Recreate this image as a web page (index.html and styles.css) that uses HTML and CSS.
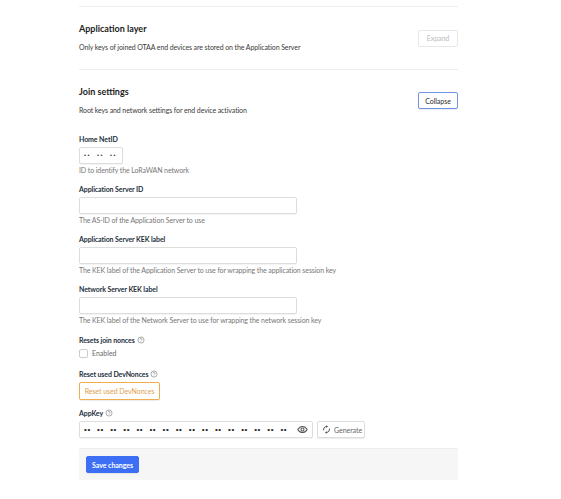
FILE: index.html
```html
<!DOCTYPE html>
<html lang="en">
<head>
<meta charset="utf-8">
<title>Join settings</title>
<link rel="stylesheet" href="styles.css">
</head>
<body>
<main class="page">
  <section class="section first">
    <div class="section-text">
      <h2>Application layer</h2>
      <p>Only keys of joined OTAA end devices are stored on the Application Server</p>
    </div>
    <button class="btn disabled">Expand</button>
  </section>
  <section class="section second">
    <div class="section-text">
      <h2>Join settings</h2>
      <p>Root keys and network settings for end device activation</p>
    </div>
    <button class="btn focus">Collapse</button>
  </section>
  <form class="form">
    <div class="field netid">
      <label>Home NetID</label>
      <div class="input small"><span class="key-dots net"><i>••</i><i>••</i><i>••</i></span></div>
      <small>ID to identify the LoRaWAN network</small>
    </div>
    <div class="field">
      <label>Application Server ID</label>
      <div class="input wide"></div>
      <small>The AS-ID of the Application Server to use</small>
    </div>
    <div class="field">
      <label>Application Server KEK label</label>
      <div class="input wide"></div>
      <small>The KEK label of the Application Server to use for wrapping the application session key</small>
    </div>
    <div class="field">
      <label>Network Server KEK label</label>
      <div class="input wide"></div>
      <small>The KEK label of the Network Server to use for wrapping the network session key</small>
    </div>
    <div class="field nonces">
      <label>Resets join nonces <svg class="help" viewBox="0 0 12 12"><circle cx="6" cy="6" r="4.6"/><path d="M4.6 4.8a1.4 1.4 0 1 1 2.2 1.2c-.5.4-.8.6-.8 1.2M6 8.4v.6"/></svg></label>
      <div class="check"><span class="box"></span><span>Enabled</span></div>
    </div>
    <div class="field reset">
      <label>Reset used DevNonces <svg class="help" viewBox="0 0 12 12"><circle cx="6" cy="6" r="4.6"/><path d="M4.6 4.8a1.4 1.4 0 1 1 2.2 1.2c-.5.4-.8.6-.8 1.2M6 8.4v.6"/></svg></label>
      <button type="button" class="btn warn">Reset used DevNonces</button>
    </div>
    <div class="field appkey">
      <label>AppKey <svg class="help" viewBox="0 0 12 12"><circle cx="6" cy="6" r="4.6"/><path d="M4.6 4.8a1.4 1.4 0 1 1 2.2 1.2c-.5.4-.8.6-.8 1.2M6 8.4v.6"/></svg></label>
      <div class="key-row">
        <div class="input key">
          <span class="key-dots"><i>••</i><i>••</i><i>••</i><i>••</i><i>••</i><i>••</i><i>••</i><i>••</i><i>••</i><i>••</i><i>••</i><i>••</i><i>••</i><i>••</i><i>••</i><i>••</i></span>
          <svg class="eye" viewBox="0 0 16 16"><path d="M1.2 8C2.8 5 5.2 3.5 8 3.5S13.2 5 14.8 8c-1.6 3-4 4.5-6.800 4.500S2.800 11 1.200 8z"/><circle cx="8" cy="8" r="2.200"/></svg>
        </div>
        <button type="button" class="btn generate">
          <svg class="autorenew" viewBox="0 0 16 16"><path d="M3 9.500A5.200 5.200 0 0 1 8 2.800"/><path d="M13 6.500A5.200 5.200 0 0 1 8 13.200"/><path class="fill" d="M7.600 .6v4.400l3-2.200zM8.400 15.400V11l-3 2.200z"/></svg>
          Generate
        </button>
      </div>
    </div>
    <div class="footer"><button type="button" class="btn primary">Save changes</button></div>
  </form>
</main>
</body>
</html>
```
FILE: styles.css
```css
* { box-sizing: border-box; }
html, body { margin: 0; background: #fff; }
body { font-family: "Lato", "Noto Sans", sans-serif; color: #222; }
.page { width: 379px; margin-left: 79px; padding-top: 6px; }
.section { display: flex; justify-content: space-between; align-items: center; border-top: 1px solid #eee; }
.first { height: 63px; }
.first .section-text { padding-bottom: 1px; }
.second { height: 62px; }
.section-text { display: flex; flex-direction: column; }
h2 { margin: 0 0 7px; font-size: 9px; line-height: 13px; font-weight: 700; color: #1c1c1c; }
p { margin: 0; font-size: 7px; letter-spacing: -.1px; line-height: 11px; color: #3a3a3a; }
.btn { font-family: inherit; font-size: 7px; letter-spacing: -.05px; height: 17px; padding: 0 6px; background: #fff; border: 1px solid #ddd; border-radius: 2px; color: #333; box-shadow: 0 1px 1px rgba(0,0,0,.08); }
.disabled { width: 40px; color: #bbb; border-color: #e8e8e8; box-shadow: none; }
.focus { width: 40px; border-color: #6f93e8; color: #2a2a2a; }
.form { display: flex; flex-direction: column; }
.field { display: flex; flex-direction: column; align-items: flex-start; }
.netid { margin-top: 3px; }
label { display: flex; align-items: center; gap: 2px; font-size: 7px; letter-spacing: -.1px; line-height: 10px; font-weight: 700; color: #26303c; margin-bottom: 3px; }
.input { height: 17px; border: 1px solid #ddd; border-radius: 2px; background: #fff; box-shadow: 0 1px 1px rgba(0,0,0,.05); }
.small { width: 44px; display: flex; align-items: center; padding-left: 4px; }
.wide { width: 218px; }
small { font-size: 7px; letter-spacing: -.1px; line-height: 11px; color: #777; margin-top: 1px; margin-bottom: 8px; }
.nonces { margin-top: 1px; }
.check { display: flex; align-items: center; gap: 4px; font-size: 7px; line-height: 10px; color: #666; margin-bottom: 11px; }
.box { width: 9px; height: 9px; border: 1px solid #ccc; border-radius: 2px; background: #fff; }
.help { width: 8px; height: 8px; fill: none; stroke: #777; stroke-width: .9; }
.reset label { margin-bottom: 3px; }
.warn { width: 81px; height: 18px; color: #e0a050; border-color: #f0ad4e; padding: 0; }
.appkey { margin-top: 8px; }
.key-row { display: flex; gap: 4px; }
.key { width: 234px; height: 17px; display: flex; align-items: center; justify-content: space-between; padding: 0 4px; }
.key-dots { display: flex; font-size: 8px; font-family: "Liberation Sans", sans-serif; line-height: 1; color: #222; }
.key-dots i { font-style: normal; width: 13.100px; letter-spacing: .6px; }
.net { font-size: 5.500px; color: #333; }
.net i { width: 13px; letter-spacing: 1.500px; }
.eye { width: 11px; height: 11px; fill: none; stroke: #555; stroke-width: 1.500; }
.generate { width: 48px; display: flex; align-items: center; gap: 3px; padding: 0 4px; color: #666; white-space: nowrap; }
.autorenew { flex: none; width: 9px; height: 9px; fill: none; stroke: #333; stroke-width: 1.500; }
.autorenew .fill { fill: #333; stroke: none; }
.footer { margin-top: 10px; height: 32px; background: #f6f6f6; border-top: 1px solid #eee; display: flex; align-items: center; padding-left: 7px; }
.primary { width: 53px; height: 17px; padding: 0; background: #3d6ff5; border-color: #3d6ff5; color: #fff; font-weight: 700; }
```
